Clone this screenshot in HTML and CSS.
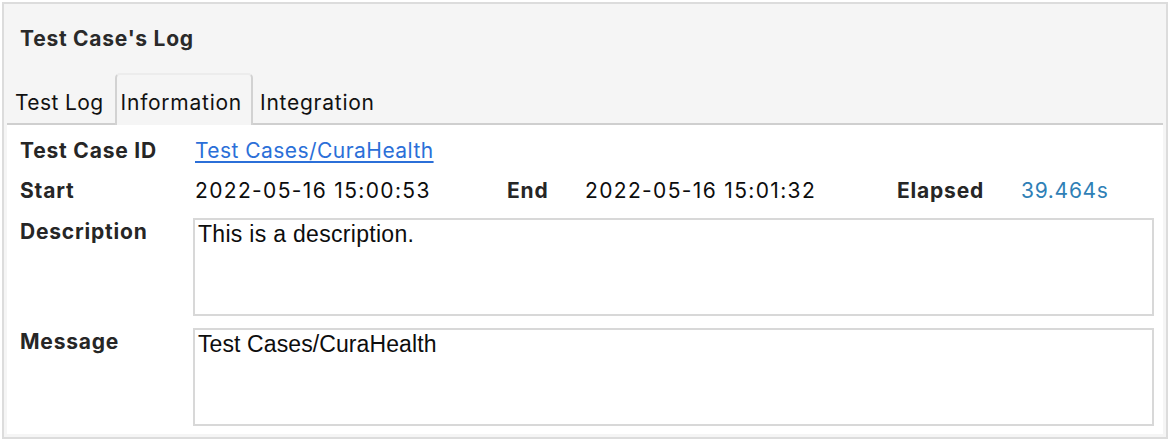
FILE: index.html
```html
<!DOCTYPE html>
<html>
<head>
<meta charset="utf-8">
<link rel="stylesheet" href="styles.css">
</head>
<body>
<div class="panel">
  <div class="header">Test Case's Log</div>
  <div class="tabs">
    <div class="tab tab-first">Test Log</div>
    <div class="tab active">Information</div>
    <div class="tab tab-last">Integration</div>
    <div class="tab-fill"></div>
  </div>
  <div class="content">
    <div class="row">
      <div class="label">Test Case ID</div>
      <a class="link" href="#">Test Cases/CuraHealth</a>
    </div>
    <div class="row">
      <div class="label">Start</div>
      <div class="value col-val">2022-05-16 15:00:53</div>
      <div class="label col-end">End</div>
      <div class="value col-val">2022-05-16 15:01:32</div>
      <div class="label col-elapsed">Elapsed</div>
      <div class="value elapsed">39.464s</div>
    </div>
    <div class="row area-row">
      <div class="label">Description</div>
      <div class="box">This is a description.</div>
    </div>
    <div class="row area-row">
      <div class="label">Message</div>
      <div class="box box-msg">Test Cases/CuraHealth</div>
    </div>
  </div>
</div>
</body>
</html>
```

FILE: styles.css
```css
* { box-sizing: border-box; }
html, body { margin: 0; padding: 0; background: #ffffff; }
body {
  font-family: Inter, "Liberation Sans", sans-serif;
  width: 1170px;
  height: 442px;
  padding: 2px;
}
.panel {
  width: 1166px;
  height: 437px;
  border: 2px solid #dcdcdc;
  background: #f5f5f5;
  display: flex;
  flex-direction: column;
  padding: 0 3px 3px 3px;
}
.header {
  height: 69px;
  padding: 23px 0 0 13px;
  font-size: 21px;
  font-weight: 700;
  letter-spacing: 0.75px;
  color: #2a2a2a;
  line-height: 24px;
}
.tabs {
  display: flex;
  height: 52px;
  align-items: stretch;
}
.tab {
  font-size: 21px;
  letter-spacing: 0.75px;
  color: #111;
  padding: 17px 11px 0 8px;
  border-bottom: 2px solid #cfcfcf;
  line-height: 26px;
}
.tab.tab-first { letter-spacing: 0.4px; }
.tab.active {
  border: 2px solid #d2d2d2;
  border-top-color: #ececec;
  border-bottom: none;
  border-radius: 5px 5px 0 0;
  padding: 15px 9px 0 4px;
}
.tab.tab-last { padding-left: 7px; padding-right: 0; }
.tab-fill {
  flex: 1;
  border-bottom: 2px solid #cfcfcf;
}
.content {
  flex: 1;
  background: #ffffff;
  padding: 12px 9px 0 13px;
  display: flex;
  flex-direction: column;
  gap: 12px;
}
.row {
  display: flex;
  align-items: flex-start;
  font-size: 21px;
  line-height: 28px;
}
.label {
  width: 175px;
  flex: none;
  font-weight: 700;
  letter-spacing: 0.8px;
  color: #262626;
}
.area-row .label { width: 173px; }
.value { color: #0d0d0d; letter-spacing: 1.35px; }
.col-val { width: 312px; flex: none; }
.col-end { width: 78px; }
.col-elapsed { width: 124px; }
.elapsed { color: #2f80b6; letter-spacing: 0.7px; }
.link {
  color: #2b6fd8;
  letter-spacing: 0.45px;
  text-decoration: underline;
  text-underline-offset: 3px;
}
.area-row { margin-top: 1px; }
.area-row + .area-row { margin-top: 0; }
.box {
  width: 961px;
  height: 98px;
  border: 2px solid #d8d8d8;
  padding: 0 3px;
  color: #0d0d0d;
  font-family: "Liberation Sans", Arial, sans-serif;
  font-size: 23px;
  letter-spacing: 0.3px;
}
.box-msg { letter-spacing: 0.1px; }
```
